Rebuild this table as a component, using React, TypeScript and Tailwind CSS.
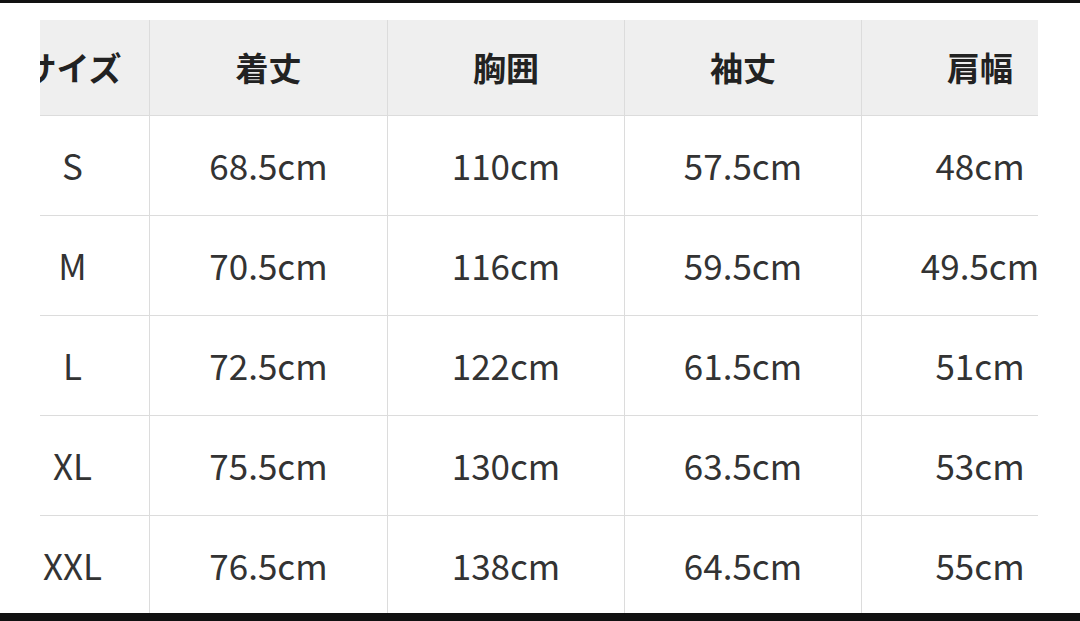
const headers = ['サイズ', '着丈', '胸囲', '袖丈', '肩幅'];

const rows = [
  ['S', '68.5cm', '110cm', '57.5cm', '48cm'],
  ['M', '70.5cm', '116cm', '59.5cm', '49.5cm'],
  ['L', '72.5cm', '122cm', '61.5cm', '51cm'],
  ['XL', '75.5cm', '130cm', '63.5cm', '53cm'],
  ['XXL', '76.5cm', '138cm', '64.5cm', '55cm'],
];

const font = { fontFamily: '"Noto Sans CJK JP", "Noto Sans", sans-serif' };

export default function App() {
  return (
    <div className="w-[1080px] h-[621px] bg-white flex flex-col overflow-hidden" style={font}>
      <div className="h-[3px] bg-[#111]" />
      <div className="flex-1 min-h-0 overflow-hidden pt-[17px] pl-[40px]">
        <div className="w-[998px] overflow-hidden">
          {/* table is scrolled sideways, so the first column is cut at the left */}
          <div className="ml-[-44px] w-[1103px] grid grid-cols-[154px_238px_237px_237px_237px]">
            {headers.map((h) => (
              <div
                key={h}
                className="h-[96px] flex items-center justify-center bg-[#efefef] border-r border-b border-[#dcdcdc] text-[33px] font-bold text-[#222]"
              >
                {h}
              </div>
            ))}
            {rows.map((r, i) =>
              r.map((c, j) => (
                <div
                  key={`${i}-${j}`}
                  className="h-[100px] flex items-center justify-center border-r border-b border-[#dcdcdc] text-[35px] text-[#333]"
                >
                  {c}
                </div>
              ))
            )}
          </div>
        </div>
      </div>
      <div className="h-[8px] bg-[#111]" />
    </div>
  );
}
